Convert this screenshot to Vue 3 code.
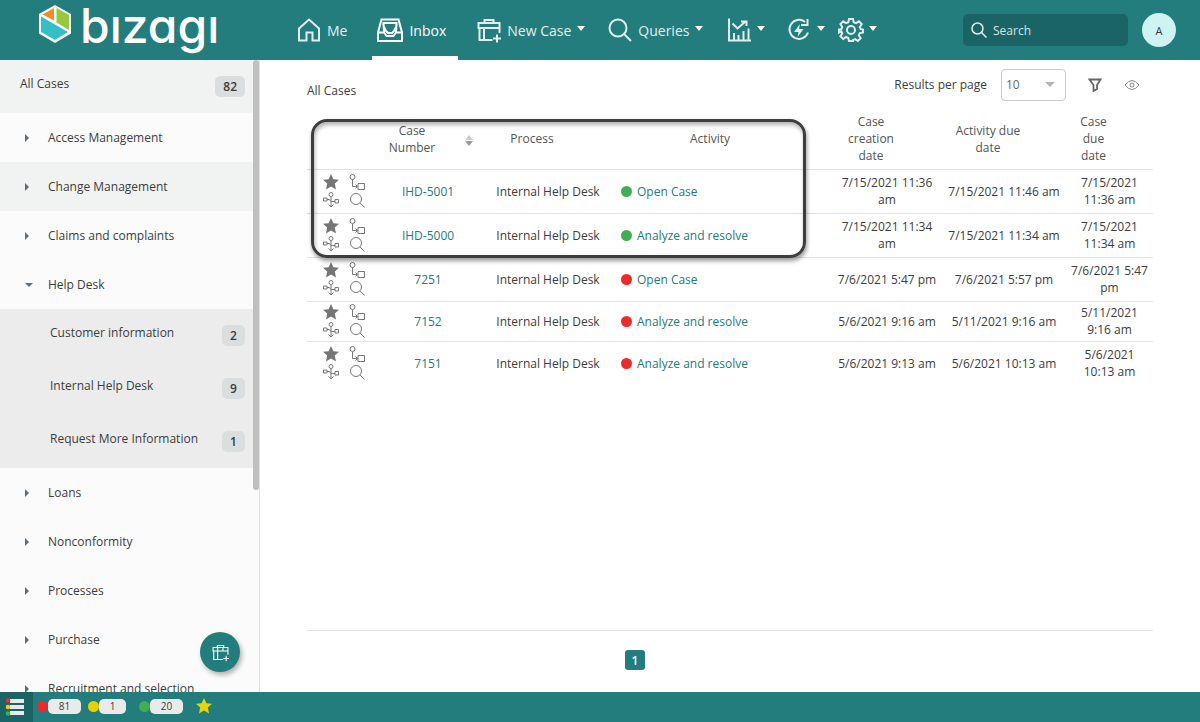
<script setup>
import { ref } from 'vue'

const groups = ref([
  { name: 'Access Management' },
  { name: 'Change Management', hover: true },
  { name: 'Claims and complaints' },
  {
    name: 'Help Desk',
    open: true,
    children: [
      { name: 'Customer information', count: 2 },
      { name: 'Internal Help Desk', count: 9 },
      { name: 'Request More Information', count: 1 }
    ]
  },
  { name: 'Loans' },
  { name: 'Nonconformity' },
  { name: 'Processes' },
  { name: 'Purchase' },
  { name: 'Recruitment and selection' }
])

const cases = [
  { id: 'IHD-5001', activity: 'Open Case', state: 'ok', created: '7/15/2021 11:36 am', activityDue: '7/15/2021 11:46 am', due: ['7/15/2021', '11:36 am'] },
  { id: 'IHD-5000', activity: 'Analyze and resolve', state: 'ok', created: '7/15/2021 11:34 am', activityDue: '7/15/2021 11:34 am', due: ['7/15/2021', '11:34 am'] },
  { id: '7251', activity: 'Open Case', state: 'late', created: '7/6/2021 5:47 pm', activityDue: '7/6/2021 5:57 pm', due: ['7/6/2021 5:47', 'pm'] },
  { id: '7152', activity: 'Analyze and resolve', state: 'late', compact: true, created: '5/6/2021 9:16 am', activityDue: '5/11/2021 9:16 am', due: ['5/11/2021', '9:16 am'] },
  { id: '7151', activity: 'Analyze and resolve', state: 'late', created: '5/6/2021 9:13 am', activityDue: '5/6/2021 10:13 am', due: ['5/6/2021', '10:13 am'] }
]

const perPage = ref('10')
const query = ref('')
</script>

<template>
  <div class="page">
    <header class="topbar">
      <a href="#" class="brand" aria-label="bizagi">
        <svg class="cube" viewBox="0 0 34 38" aria-hidden="true">
          <path d="M17 0 33 9v19.500L17 38 1 28.500V9Z" fill="#fff" />
          <path d="M16 3v12.500L4.500 9.500Z" fill="#f68b1f" />
          <path d="M18.500 3 31 10v15L18.500 17.500Z" fill="#95c93d" />
          <path d="M3 11.500 30 27 17 35 3 27Z" fill="#33bfc4" />
        </svg>
        <span class="wordmark">bızagı</span>
      </a>

      <nav class="nav">
        <a href="#" class="nav-item me">
          <svg class="ico" viewBox="0 0 24 24"><path d="M2 10.500 12 1.500l10 9V22.500h-6.500V14.500h-6v8H2Z" /></svg>
          <span>Me</span>
        </a>
        <a href="#" class="nav-item inbox active">
          <svg class="ico wide" viewBox="0 0 26 24"><path d="M4.500 1.500h17l3.500 13v8.500H1v-8.500Z" /><path d="M1.500 14.500h5.500l2.500 3.500h7l2.500-3.500h5.500" /><path d="M7 14 6.500 5h13L19 14M6.500 5v3l2.500 5 2 2h4l2-2 2.500-5V5" /></svg>
          <span>Inbox</span>
        </a>
        <button class="nav-item new-case">
          <svg class="ico" viewBox="0 0 24 24"><path d="M7.500 5V2h9v3M22.500 15V5h-21v5h21M2.500 10v12h13M7 10v12M2.500 5h19M16 5h0M16 20.500h8M20 16.500v8" /></svg>
          <span>New Case</span><i class="caret"></i>
        </button>
        <button class="nav-item queries">
          <svg class="ico" viewBox="0 0 24 24"><circle cx="10" cy="10" r="8.500" /><path d="m16 16 7 7" /></svg>
          <span>Queries</span><i class="caret"></i>
        </button>
        <button class="nav-item reports" aria-label="Reports">
          <svg class="ico" viewBox="0 0 24 24"><path d="M2 .5v22h22M5.500 5.500l5 5 8-7M14 3.500h5.500V8M7 22v-7M11.500 22v-5M16.500 22v-9M21.500 22V10.500" /></svg>
          <i class="caret"></i>
        </button>
        <button class="nav-item actions" aria-label="Live processes">
          <svg class="ico" viewBox="0 0 24 24"><path d="M21 14.500a9.500 9.500 0 1 1-3-10.500M20.500 1v6H14" /><path d="m13 6-6 8h4.500l-1 5 6-8H12l1-5Z" fill="currentColor" stroke="none" /></svg>
          <i class="caret"></i>
        </button>
        <button class="nav-item settings" aria-label="Settings">
          <svg class="ico" viewBox="0 0 24 24"><circle cx="12" cy="12" r="4" /><path d="M10 1h4l.7 3.200 2.300 1 2.900-1.900 2.800 2.800L20.800 9l1 2.200 2.200.300v3l-3.200.700-1 2.300 1.900 2.700-2.800 2.800-2.800-1.900-2.200 1L14 23h-4l-.700-3-2.300-1-2.800 2-2.800-2.800 1.900-2.700-1-2.300L0 14.500v-3l2.300-.300 1-2.200-1.900-2.900 2.800-2.800L7 5.200l2.300-1Z" /></svg>
          <i class="caret"></i>
        </button>
      </nav>

      <label class="search">
        <svg viewBox="0 0 16 16" aria-hidden="true"><circle cx="6.500" cy="6.500" r="5.500" /><path d="m10.500 10.500 5 5" /></svg>
        <input v-model="query" type="text" placeholder="Search" aria-label="Search" />
      </label>
      <button class="avatar">A</button>
    </header>

    <div class="body">
      <aside class="sidebar">
        <nav class="list">
          <button class="all"><span>All Cases</span><b class="badge">82</b></button>
          <template v-for="g in groups" :key="g.name">
            <button class="group" :class="{ hover: g.hover }" @click="g.open = !g.open">
              <i class="arrow" :class="{ open: g.open }"></i><span>{{ g.name }}</span>
            </button>
            <template v-if="g.open && g.children">
              <button v-for="c in g.children" :key="c.name" class="child">
                <span>{{ c.name }}</span><b class="badge">{{ c.count }}</b>
              </button>
            </template>
          </template>
        </nav>
        <div class="track"><div class="thumb"></div></div>
        <button class="fab" aria-label="Create case">
          <svg viewBox="0 0 24 24"><path d="M7.500 5V2h9v3M22.500 15V5h-21v5h21M2.500 10v12h13M8 5v17M15.500 5v5M16 20.500h8M20 16.500v8" /></svg>
        </button>
      </aside>

      <main class="main">
        <div class="tools">
          <h1>All Cases</h1>
          <label for="per-page">Results per page</label>
          <span class="select">
            <select id="per-page" v-model="perPage"><option>10</option><option>20</option><option>50</option></select>
            <i></i>
          </span>
          <button class="tool filter" aria-label="Filter">
            <svg viewBox="0 0 14 14"><path d="M1.500 1.500h11L9 7v4l-3.500 2V7Z" /></svg>
          </button>
          <button class="tool eye" aria-label="Visible columns">
            <svg viewBox="0 0 16 12"><path d="M1 6q7-9 14 0-7 9-14 0Z" /><circle cx="8" cy="6" r="2" /></svg>
          </button>
        </div>

        <div class="grid">
          <table>
            <colgroup>
              <col class="c-icons" /><col class="c-case" /><col class="c-process" /><col class="c-activity" />
              <col class="c-created" /><col class="c-adue" /><col class="c-due" />
            </colgroup>
            <thead>
              <tr>
                <th></th>
                <th class="sortable">Case<br />Number
                  <svg class="sort" viewBox="0 0 8 12"><path d="M0 5 4 0l4 5Z" fill="#ccc" /><path d="M0 6h8l-4 5Z" fill="#999" /></svg>
                </th>
                <th>Process</th>
                <th>Activity</th>
                <th>Case<br />creation<br />date</th>
                <th>Activity due<br />date</th>
                <th>Case<br />due<br />date</th>
              </tr>
            </thead>
            <tbody>
              <tr v-for="c in cases" :key="c.id" :class="{ compact: c.compact }">
                <td class="icons">
                  <div class="icon-set">
                    <button aria-label="Favorite"><svg viewBox="0 0 16 16"><path d="m8 0 2.400 5.200 5.600.600-4.200 3.800L13 15.500 8 12.600l-5 2.900 1.200-5.900L0 5.800l5.600-.600Z" fill="#757575" stroke="none" /></svg></button>
                    <button aria-label="Process path"><svg viewBox="0 0 16 16"><circle cx="3.500" cy="3" r="2.500" /><path d="M3.500 5.500v7H8M6.500 10.500l2 2-2 2M9 9.500h6.500v6H9Z" /></svg></button>
                    <button aria-label="Subprocesses"><svg viewBox="0 0 16 16"><circle cx="8" cy="2.500" r="2" /><path d="M8 4.500V15M5.500 12.500 8 15l2.500-2.500M.5 6h3.500v3H.500ZM12 7.500h3.500v3.500H12ZM4 7.500h2.500L8 9.500h4" /></svg></button>
                    <button aria-label="Case details"><svg viewBox="0 0 16 16"><circle cx="7" cy="7" r="5.500" /><path d="m11 11 4.500 4.500" /></svg></button>
                  </div>
                </td>
                <td><a href="#">{{ c.id }}</a></td>
                <td>Internal Help Desk</td>
                <td class="activity"><span class="state"><i class="dot" :class="c.state"></i><a href="#">{{ c.activity }}</a></span></td>
                <td>{{ c.created }}</td>
                <td>{{ c.activityDue }}</td>
                <td>{{ c.due[0] }}<br />{{ c.due[1] }}</td>
              </tr>
            </tbody>
          </table>
          <div class="callout"></div>
        </div>

        <div class="pager"><button>1</button></div>
      </main>
    </div>

    <footer class="status">
      <button class="legend" aria-label="All states">
        <svg viewBox="0 0 20 18"><path d="M5 1h14v4H5ZM5 7h14v4H5ZM5 13h14v4H5Z" fill="#e8eaea" /><circle cx="3" cy="2.500" r="2.300" fill="#e92b2b" /><circle cx="3" cy="9" r="2.300" fill="#e6d200" /><circle cx="3" cy="15.500" r="2.300" fill="#43ad54" /></svg>
      </button>
      <button class="tally"><i class="dot late"></i><span>81</span></button>
      <button class="tally small"><i class="dot soon"></i><span>1</span></button>
      <button class="tally"><i class="dot ok"></i><span>20</span></button>
      <button class="fav" aria-label="Favorites"><svg viewBox="0 0 16 16"><path d="m8 0 2.400 5.200 5.600.600-4.200 3.800L13 15.500 8 12.600l-5 2.900 1.200-5.900L0 5.800l5.600-.600Z" fill="#e6d60a" /></svg></button>
    </footer>
  </div>
</template>

<style>
body {
  margin: 0;
}
</style>

<style scoped>
.page {
  display: flex;
  flex-direction: column;
  height: 100vh;
  overflow: hidden;
  background: #fff;
  color: #3c3c3c;
  font-family: "Open Sans", "Noto Sans", sans-serif;
  font-size: 12px;
  line-height: 17px;
}
.page * {
  box-sizing: border-box;
}
button {
  padding: 0;
  border: 0;
  background: none;
  color: inherit;
  font: inherit;
  cursor: pointer;
}
a {
  color: #237b7b;
  text-decoration: none;
}
svg {
  display: block;
  fill: none;
  stroke: currentColor;
}

/* Top bar */
.topbar {
  display: flex;
  align-items: center;
  flex: none;
  height: 60px;
  padding-right: 24px;
  background: #237d7d;
}
.brand {
  display: flex;
  align-items: center;
  width: 260px;
  height: 60px;
  padding-left: 38px;
  gap: 8px;
  color: #fff;
}
.cube {
  width: 34px;
  height: 38px;
  margin-bottom: 12px;
  stroke: none;
}
.wordmark {
  margin-bottom: 9px;
  font-family: Inter, "Open Sans", sans-serif;
  font-size: 48px;
  font-weight: 500;
  line-height: 50px;
  font-feature-settings: "cv11";
}
.nav {
  display: flex;
  flex: 1;
  height: 60px;
  padding-left: 32px;
}
.nav-item {
  display: flex;
  align-items: center;
  gap: 6px;
  height: 60px;
  padding: 0 5px;
  color: #e3eded;
  font-size: 14px;
  white-space: nowrap;
}
.ico {
  width: 24px;
  height: 24px;
  stroke-width: 2;
  overflow: visible;
}
.ico.wide {
  width: 26px;
}
.me {
  margin-right: 20px;
}
.active {
  padding-right: 12px;
  border-bottom: 4px solid #fff;
  padding-top: 4px;
  color: #fff;
}
.new-case {
  margin-left: 14px;
}
.queries {
  margin-left: 13px;
}
.reports {
  margin-left: 14px;
}
.actions {
  margin-left: 12px;
}
.settings {
  margin-left: 4px;
}
.caret {
  border: 4px solid transparent;
  border-top: 5px solid #fff;
  border-bottom: 0;
  margin-bottom: 3px;
}
.search {
  display: flex;
  align-items: center;
  gap: 6px;
  width: 165px;
  height: 32px;
  padding: 0 8px;
  border-radius: 5px;
  background: #1b6465;
  color: #e3eded;
}
.search svg {
  flex: none;
  width: 16px;
  height: 16px;
  stroke-width: 1.5;
}
.search input {
  width: 100%;
  min-width: 0;
  padding: 0;
  border: 0;
  outline: 0;
  background: none;
  color: inherit;
  font: inherit;
}
.search input::placeholder {
  color: #d6e3e3;
  opacity: 1;
}
.avatar {
  width: 34px;
  height: 34px;
  margin-left: 14px;
  border-radius: 50%;
  background: #cff2f2;
  font-size: 11px;
}

/* Sidebar */
.body {
  display: flex;
  flex: 1;
  min-height: 0;
}
.sidebar {
  position: relative;
  display: flex;
  flex: none;
  width: 260px;
  border-right: 1px solid #e2e2e2;
  background: #fbfbfb;
}
.list {
  flex: 1;
  overflow: hidden;
}
.list button {
  display: flex;
  align-items: center;
  width: 100%;
  text-align: left;
}
.list span {
  flex: 1;
}
.list .all {
  height: 53px;
  padding: 0 8px 0 20px;
  background: #f1f3f3;
}
.all span,
.child span {
  margin-bottom: 6px;
}
.list .group {
  height: 49px;
  padding-left: 25px;
}
.list .hover {
  background: #f1f3f3;
}
.list .child {
  height: 53px;
  padding: 0 8px 0 50px;
  background: #ececec;
}
.badge {
  min-width: 23px;
  padding: 2px 8px;
  border-radius: 5px;
  background: #dadedf;
  font-weight: 600;
  text-align: center;
}
.arrow {
  width: 23px;
}
.arrow::before {
  display: block;
  width: 0;
  border: 4px solid transparent;
  border-left: 4px solid #5f6d79;
  border-right: 0;
  content: "";
}
.arrow.open::before {
  border: 4px solid transparent;
  border-top: 4px solid #5f6d79;
  border-bottom: 0;
}
.track {
  width: 6px;
}
.thumb {
  height: 68%;
  border-radius: 3px;
  background: #bfbfbf;
}
.fab {
  position: absolute;
  right: 19px;
  bottom: 20px;
  display: grid;
  place-items: center;
  width: 40px;
  height: 40px;
  border-radius: 50%;
  background: #237d7d;
  box-shadow: 2px 3px 5px rgba(0, 0, 0, 0.3);
  color: #fff;
}
.fab svg {
  width: 17px;
  height: 17px;
  stroke-width: 1.5;
  overflow: visible;
}

/* Case list */
.main {
  display: flex;
  flex: 1;
  flex-direction: column;
  min-width: 0;
  padding: 0 47px;
}
.tools {
  display: flex;
  align-items: center;
  height: 49px;
}
.tools h1 {
  flex: 1;
  margin: 12px 0 0;
  font-size: 12px;
  font-weight: 400;
}
.select {
  display: flex;
  align-items: center;
  position: relative;
  margin-left: 14px;
}
.select select {
  appearance: none;
  width: 65px;
  height: 32px;
  padding: 0 4px;
  border: 1px solid #c9cccd;
  border-radius: 4px;
  background: #fff;
  color: #666;
  font: inherit;
}
.select i {
  position: absolute;
  right: 11px;
  border: 5px solid transparent;
  border-top: 5px solid #b5b5b5;
  border-bottom: 0;
  pointer-events: none;
}
.filter {
  margin-left: 22px;
  color: #666;
}
.filter svg {
  width: 14px;
  height: 14px;
  stroke-width: 1.8;
}
.eye {
  margin: 0 13px 0 22px;
  color: #888;
}
.eye svg {
  width: 16px;
  height: 12px;
}
.grid {
  position: relative;
}
table {
  width: 100%;
  border-collapse: collapse;
  table-layout: fixed;
  text-align: center;
}
.c-icons {
  width: 73px;
}
.c-case {
  width: 96px;
}
.c-process {
  width: 144px;
}
.c-activity {
  width: 212px;
}
.c-created {
  width: 110px;
}
.c-adue {
  width: 124px;
}
.c-due {
  width: 87px;
}
th {
  height: 60px;
  padding: 0 32px 0 0;
  border-bottom: 1px solid #e2e2e2;
  color: #555;
  font-weight: 400;
}
td {
  height: 44px;
  padding: 0 4px;
  border-bottom: 1px solid #e2e2e2;
}
.compact td {
  height: 40px;
}
tr:last-child td {
  border-bottom: 0;
}
.sortable {
  position: relative;
}
.sort {
  position: absolute;
  top: 26px;
  right: 3px;
  width: 8px;
  height: 12px;
  stroke: none;
}
td.icons {
  padding: 0 0 0 16px;
}
.icon-set {
  display: grid;
  grid-template-columns: 16px 16px;
  column-gap: 10px;
  row-gap: 2px;
  color: #777;
}
.icon-set svg {
  width: 16px;
  height: 16px;
}
td.activity {
  padding: 0 1px;
}
.state {
  display: flex;
  align-items: center;
  gap: 5px;
}
.dot {
  width: 11px;
  height: 11px;
  border-radius: 50%;
}
.ok {
  background: #43ad54;
}
.late {
  background: #e92b2b;
}
.soon {
  background: #e6d200;
}
.callout {
  position: absolute;
  top: 10px;
  left: 4px;
  width: 495px;
  height: 139px;
  border: 3px solid #3d3d3d;
  border-radius: 16px;
  box-shadow: 1px 3px 4px rgba(0, 0, 0, 0.4), inset 1px 3px 4px rgba(0, 0, 0, 0.3);
  pointer-events: none;
}
.pager {
  display: flex;
  justify-content: center;
  margin-top: auto;
  padding: 19px 0 22px;
  padding-right: 190px;
  border-top: 1px solid #e2e2e2;
}
.pager button {
  width: 20px;
  height: 20px;
  border-radius: 3px;
  background: #237d7d;
  color: #fff;
  font-weight: 600;
}

/* Status bar */
.status {
  display: flex;
  flex: none;
  height: 30px;
  background: #237d7d;
}
.legend {
  display: grid;
  place-items: center;
  width: 33px;
  padding-right: 4px;
  background: #1b6465;
}
.legend svg {
  width: 20px;
  height: 18px;
  stroke: none;
}
.tally {
  display: flex;
  align-items: center;
  height: 28px;
  margin-left: 4px;
}
.tally + .tally {
  margin-left: 7px;
}
.tally.small + .tally {
  margin-left: 13px;
}
.tally span {
  width: 33px;
  border-radius: 5px;
  background: #e9eaea;
  font-size: 10px;
  line-height: 15px;
}
.tally.small span {
  width: 27px;
}
.fav {
  height: 28px;
  margin-left: 13px;
}
.fav svg {
  width: 16px;
  height: 16px;
  stroke: none;
}
</style>
